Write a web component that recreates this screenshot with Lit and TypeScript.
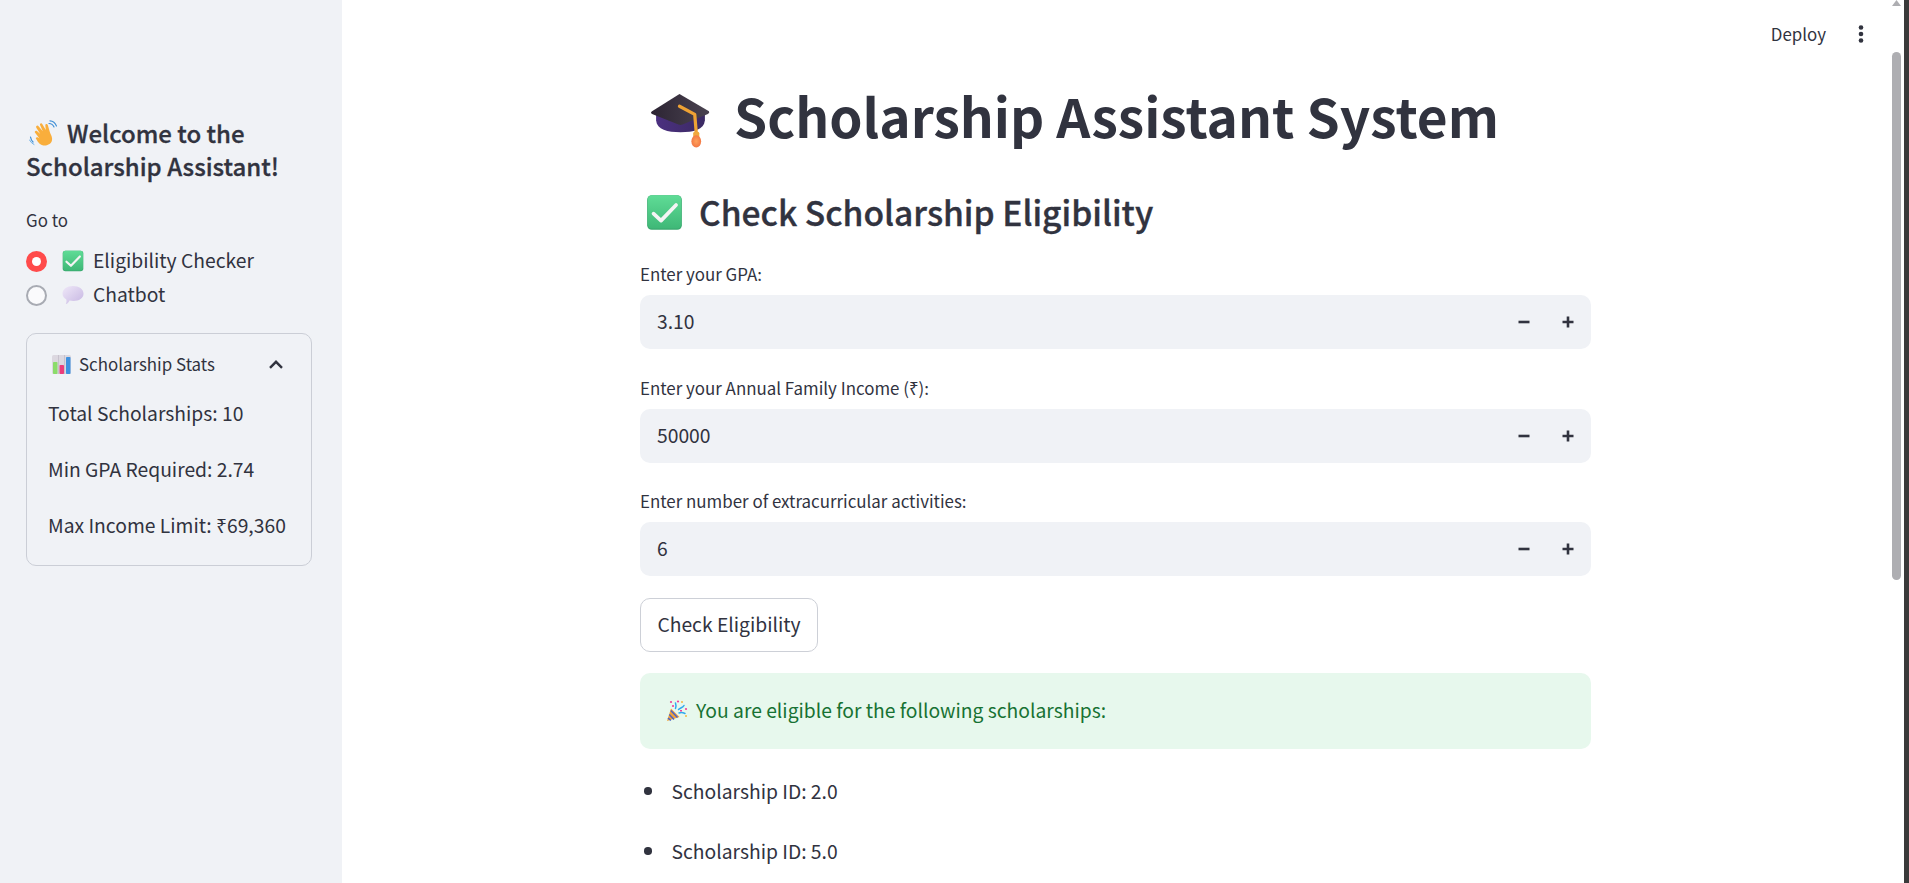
import { LitElement, html, css } from "lit";
import { customElement } from "lit/decorators.js";

const check = (s: number) => html`<svg class="ico" width=${s} height=${s} viewBox="0 0 32 32">
  <defs><linearGradient id="gc" x1="0" y1="0" x2="0" y2="1"><stop offset="0" stop-color="#5fdc96"/><stop offset="1" stop-color="#3fb877"/></linearGradient></defs>
  <rect x="1" y="1" width="30" height="30" rx="4" fill="#3aa96f"/>
  <rect x="1.5" y="1" width="29" height="28.8" rx="3.6" fill="url(#gc)"/>
  <path d="M6.5 17 L13 23 L26 9.5" fill="none" stroke="#f4f4f4" stroke-width="3.2" stroke-linecap="round" stroke-linejoin="round"/>
</svg>`;

const cap = html`<svg class="ico cap" width="61" height="55" viewBox="0 0 60 54">
  <defs><linearGradient id="gk" x1="0" y1="0" x2="1" y2="0"><stop offset="0" stop-color="#2c2433"/><stop offset="1" stop-color="#4a4350"/></linearGradient>
  <linearGradient id="gb" x1="0" y1="0" x2="1" y2="0"><stop offset="0" stop-color="#4b3080"/><stop offset="1" stop-color="#3b2a63"/></linearGradient>
  <radialGradient id="gt" cx=".5" cy=".5" r=".6"><stop offset="0" stop-color="#ffa15c"/><stop offset="1" stop-color="#f0703f"/></radialGradient></defs>
  <path d="M6 16 L6 27 C7 36 17 38.500 30 38.500 C43 38.500 53 36 54 27 L54 16 Z" fill="url(#gb)"/>
  <path d="M29 1 L58 18 Q59 19.500 57 20.500 L32 31 Q30 31.800 28 31 L2 20.500 Q0 19.500 2 18 Z" fill="url(#gk)"/>
  <path d="M29 13 L44 21 L45.500 39" fill="none" stroke="#eea234" stroke-width="3.200" stroke-linecap="round" stroke-linejoin="round"/>
  <rect x="42.500" y="38" width="6" height="6" rx="1.500" fill="#f0a83e"/>
  <ellipse cx="45.500" cy="47.500" rx="4.800" ry="6" fill="url(#gt)"/>
</svg>`;

const hand = html`<svg class="ico" width="28" height="28" viewBox="0 0 28 28">
  <path d="M9 25.500 C5 22.500 6 19 5.500 16.500 C5.300 15 7 14.500 8 16 L8.800 17.500 L7.500 10.500 C7.200 8.800 9.400 8.200 10 9.800 L11.500 14 L11 6.500 C10.900 4.700 13.300 4.500 13.700 6.200 L15 12.800 L15.500 6 C15.700 4.300 18 4.500 18 6.300 L18.300 13 L20 8.800 C20.700 7.300 22.800 8 22.400 9.700 L20.800 17 C20.300 20 21 23 18.500 25.500 C16 27.800 11.500 27.500 9 25.500 Z" fill="#f9ae3c" transform="rotate(-28 14 16) translate(1 -1)"/>
  <path d="M1.500 17 Q2 20 4 22" fill="none" stroke="#3f8fd6" stroke-width="1.200" stroke-linecap="round"/>
  <path d="M0.500 20 Q2 23 5 24.500" fill="none" stroke="#6aaee6" stroke-width="1" stroke-linecap="round"/>
  <path d="M20 3.500 Q23.500 3.500 25 7 M21 .8 Q25.500 1 27.500 6" fill="none" stroke="#3f8fd6" stroke-width="1.200" stroke-linecap="round"/>
</svg>`;

const bubble = html`<svg class="ico" width="22" height="22" viewBox="0 0 22 22">
  <defs><linearGradient id="gm" x1="0" y1="0" x2="1" y2="1"><stop offset="0" stop-color="#efe8f8"/><stop offset="1" stop-color="#c6b6e2"/></linearGradient></defs>
  <path d="M11 2 C17 2 21.500 5 21.500 9.800 C21.500 14.500 17 17 11.500 17 C10 17 8.800 16.800 7.600 16.500 C6.700 18.500 5.300 19.800 3.800 20 C4.500 18.500 4.700 16.800 4.300 15.500 C2 14.200 .5 12.300 .5 9.800 C.5 5 5 2 11 2 Z" fill="url(#gm)"/>
</svg>`;

const chart = html`<svg class="ico" width="19" height="19" viewBox="0 0 19 19">
  <rect x="0" y="0" width="19" height="19" rx="1.500" fill="#dcd8e0"/>
  <path d="M6.500 0V19M12.500 0V19" stroke="#b9b4bf" stroke-width=".6"/>
  <rect x="1" y="7" width="4.500" height="12" rx=".8" fill="#8bdc6a"/>
  <rect x="7.500" y="10" width="4.500" height="9" rx=".8" fill="#ec3d7c"/>
  <rect x="14" y="2" width="4.500" height="17" rx=".8" fill="#3f92e0"/>
</svg>`;

const popper = html`<svg class="ico" width="22" height="22" viewBox="0 0 22 22">
  <path d="M1 21 L5 8.500 L13.500 17 Z" fill="#f2a33a"/>
  <path d="M3.300 14.500 L8 19.400 M2 18 L4.800 20.500 M4.800 10.500 L11.500 17.500" stroke="#4a63c8" stroke-width="1.500"/>
  <path d="M9.500 8.500 C10.500 6 10 4.500 9.500 3 M12.500 9.500 C14 8 17 7.500 18 5.500 M13 13 C15 12 17 12.500 19 13.500" fill="none" stroke="#2fa8ee" stroke-width="1.500" stroke-linecap="round"/>
  <g fill="#ef3f9b"><circle cx="5" cy="2" r="1.100"/><circle cx="7" cy="6" r="1.100"/><circle cx="12" cy="1.500" r="1.100"/><circle cx="20" cy="9" r="1.100"/><rect x="14" y="10" width="2" height="1.500"/></g>
  <g fill="#f5b942"><circle cx="16" cy="2" r="1"/><circle cx="20" cy="16" r="1"/></g>
</svg>`;

const stepper = (value: string) => html`<div class="num">
  <span class="val">${value}</span>
  <button class="step" aria-label="minus"><svg width="12" height="12" viewBox="0 0 12 12"><path d="M.5 6H11.500" stroke="#31333f" stroke-width="2.600"/></svg></button>
  <button class="step" aria-label="plus"><svg width="12" height="12" viewBox="0 0 12 12"><path d="M.5 6H11.500M6 .5V11.500" stroke="#31333f" stroke-width="2.600"/></svg></button>
</div>`;

@customElement("app-root")
export class AppRoot extends LitElement {
  static styles = css`
    :host { display: flex; width: 1909px; height: 883px; overflow: hidden; background: #fff; color: #31333f;
      font-family: "Noto Sans CJK SC", "Noto Sans", sans-serif; font-size: 19.3px; line-height: 1.4; }
    * { box-sizing: border-box; }
    .ico { display: block; flex: none; }
    aside { width: 342px; flex: none; background: #f0f2f6; padding: 116px 30px 0 26px; }
    .welcome { margin: 0; font-size: 24px; font-weight: 500; line-height: 33px; -webkit-text-stroke: 0.3px #31333f; }
    .welcome .ico { display: inline-block; vertical-align: -5px; margin-right: 10px; margin-left: 3px; }
    .goto { font-size: 16.9px; line-height: 24px; margin-top: 26px; }
    .radios { margin-top: 15px; display: flex; flex-direction: column; gap: 6px; }
    .radio { display: flex; align-items: center; height: 28px; }
    .dot { width: 21px; height: 21px; border-radius: 50%; background: #fafafc; border: 2px solid #a8abb3; margin-right: 15px; flex: none; }
    .dot.on { background: #ff4b4b; border: 6.500px solid #ff4b4b; position: relative; }
    .dot.on::after { content: ""; position: absolute; inset: 0; background: #fff; border-radius: 50%; }
    .radio .emo { margin-right: 9px; }
    .exp { margin-top: 24px; width: 286px; height: 233px; border: 1px solid #cbced6; border-radius: 10px; padding: 0 0 0 21px; }
    .exp-h { display: flex; align-items: center; height: 60px; font-size: 16.9px; padding: 0 28px 0 4px; }
    .exp-h .ico:first-child { margin-right: 8px; }
    .exp-h .t { flex: 1; }
    .exp p { margin: 0 0 28px; line-height: 28px; white-space: nowrap; }
    .exp-h + p { margin-top: 5px; }
    main { flex: 1; position: relative; min-width: 0; overflow: hidden; }
    .deploy { position: absolute; top: 20px; right: 40px; display: flex; align-items: center; gap: 32px; font-size: 16.9px; line-height: 28px; }
    .deploy svg { display: block; }
    .col { width: 951px; margin-left: 298px; padding-top: 74px; }
    h1 { margin: 0 0 0 10px; display: flex; align-items: center; font-size: 53.2px; font-weight: 700; line-height: 82px; white-space: nowrap; }
    h1 .ico { margin-right: 23px; margin-top: 11px; }
    h2 { margin: 29px 0 0 6px; display: flex; align-items: center; gap: 16px; font-size: 33.6px; font-weight: 500; line-height: 54px; white-space: nowrap; -webkit-text-stroke: 0.35px #31333f; }
    label { display: block; font-size: 16.9px; line-height: 24px; }
    .f1 { margin-top: 23px; }
    .f2 { margin-top: 27px; }
    .f3 { margin-top: 26px; }
    .num { margin-top: 9px; height: 54px; background: #f0f2f6; border-radius: 10px; display: flex; align-items: center; padding-left: 17px; padding-right: 1px; }
    .val { flex: 1; }
    .step { width: 44px; height: 54px; border: 0; background: none; padding: 0; display: flex; align-items: center; justify-content: center; }
    .check { display: block; margin-top: 22px; height: 54px; width: 178px; background: #fff; border: 1px solid #cdd0d7; border-radius: 10px; font: inherit; color: inherit; padding: 0; }
    .ok { margin-top: 21px; height: 76px; background: #e7f8ed; color: #177233; border-radius: 10px; display: flex; align-items: center; padding-left: 26px; gap: 8px; }
    ul { list-style: none; padding: 0; margin: 28px 0 0; }
    li { display: flex; align-items: center; line-height: 28px; margin-bottom: 32px; }
    li::before { content: ""; width: 7.500px; height: 7.500px; border-radius: 50%; background: #31333f; margin: 0 20px 0 4px; }
    .thumb { position: absolute; right: 3px; top: 52px; width: 9px; height: 528px; background: #aeaeb2; border-radius: 5px; }
    .arrow { position: absolute; right: 3px; top: 0; width: 9px; height: 6px; background: #aeaeb2; clip-path: polygon(50% 0, 100% 100%, 0 100%); }
    .edge { width: 5px; flex: none; background: #3a3a3a; }
  `;

  render() {
    return html`
      <aside>
        <h3 class="welcome">${hand}Welcome to the Scholarship Assistant!</h3>
        <div class="goto">Go to</div>
        <div class="radios">
          <div class="radio"><span class="dot on"></span><span class="emo">${check(22)}</span>Eligibility Checker</div>
          <div class="radio"><span class="dot"></span><span class="emo">${bubble}</span>Chatbot</div>
        </div>
        <div class="exp">
          <div class="exp-h">${chart}<span class="t">Scholarship Stats</span>
            <svg class="ico" width="14" height="9" viewBox="0 0 14 9"><path d="M1 7.800 L7 1.800 L13 7.800" fill="none" stroke="#31333f" stroke-width="2.400"/></svg>
          </div>
          <p>Total Scholarships: 10</p>
          <p>Min GPA Required: 2.74</p>
          <p>Max Income Limit: ₹69,360</p>
        </div>
      </aside>
      <main>
        <div class="deploy"><span>Deploy</span>
          <svg width="6" height="18" viewBox="0 0 6 18"><circle cx="3" cy="2.500" r="2.300" fill="#31333f"/><circle cx="3" cy="9" r="2.300" fill="#31333f"/><circle cx="3" cy="15.500" r="2.300" fill="#31333f"/></svg>
        </div>
        <div class="col">
          <h1>${cap}Scholarship Assistant System</h1>
          <h2>${check(37)}Check Scholarship Eligibility</h2>
          <div class="field f1"><label>Enter your GPA:</label>${stepper("3.10")}</div>
          <div class="field f2"><label>Enter your Annual Family Income (₹):</label>${stepper("50000")}</div>
          <div class="field f3"><label>Enter number of extracurricular activities:</label>${stepper("6")}</div>
          <button class="check">Check Eligibility</button>
          <div class="ok">${popper}<span>You are eligible for the following scholarships:</span></div>
          <ul>
            <li>Scholarship ID: 2.0</li>
            <li>Scholarship ID: 5.0</li>
          </ul>
        </div>
        <div class="arrow"></div>
        <div class="thumb"></div>
      </main>
      <div class="edge"></div>
    `;
  }
}
